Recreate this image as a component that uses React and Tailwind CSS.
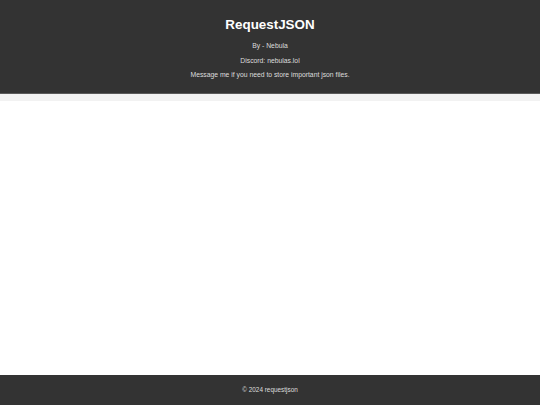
export default function App() {
  return (
    <div
      className="flex h-[405px] flex-col bg-white"
      style={{ fontFamily: '"Liberation Sans", Arial, sans-serif' }}
    >
      <header className="flex h-[93px] flex-col items-center bg-[#333333] pt-[16px] text-white">
        <h1 className="text-[13.4px] font-bold leading-[18px]">RequestJSON</h1>
        <p className="mt-[7px] text-[6.8px] leading-[10px] text-[#dddddd]">By - Nebula</p>
        <p className="mt-[5px] text-[6.8px] leading-[10px] text-[#dddddd]">Discord: nebulas.lol</p>
        <p className="mt-[4px] text-[6.8px] leading-[10px] text-[#dddddd]">
          Message me if you need to store important json files.
        </p>
      </header>
      <div className="h-[8px] border-t border-[#5a5a5a] bg-[#f2f2f2]" />
      <main className="flex-1" />
      <footer className="flex h-[30px] items-center justify-center bg-[#333333] text-[6.4px] text-[#dddddd]">
        © 2024 requestjson
      </footer>
    </div>
  );
}
